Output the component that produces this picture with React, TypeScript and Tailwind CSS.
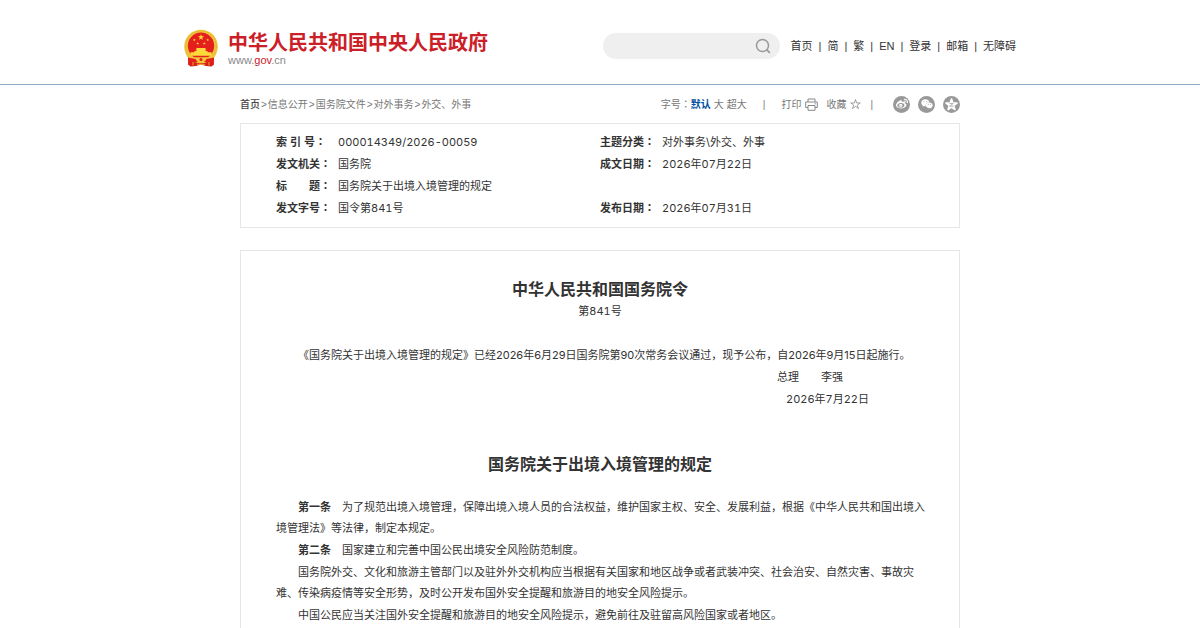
import React from "react";
import { FaWeibo, FaWeixin } from "react-icons/fa";

const navItems = ["首页", "简", "繁", "EN", "登录", "邮箱", "无障碍"];

const crumbs = ["首页", "信息公开", "国务院文件", "对外事务", "外交、外事"];

const metaRows = [
  ["索 引 号", "000014349/2026-00059", "主题分类", "对外事务\\外交、外事"],
  ["发文机关", "国务院", "成文日期", "2026年07月22日"],
  ["标　　题", "国务院关于出境入境管理的规定", "", ""],
  ["发文字号", "国令第841号", "发布日期", "2026年07月31日"],
];

const articles = [
  {
    lead: "第一条",
    text: "为了规范出境入境管理，保障出境入境人员的合法权益，维护国家主权、安全、发展利益，根据《中华人民共和国出境入境管理法》等法律，制定本规定。",
  },
  { lead: "第二条", text: "国家建立和完善中国公民出境安全风险防范制度。" },
  {
    text: "国务院外交、文化和旅游主管部门以及驻外外交机构应当根据有关国家和地区战争或者武装冲突、社会治安、自然灾害、事故灾难、传染病疫情等安全形势，及时公开发布国外安全提醒和旅游目的地安全风险提示。",
  },
  { text: "中国公民应当关注国外安全提醒和旅游目的地安全风险提示，避免前往及驻留高风险国家或者地区。" },
];

const STAR = "M0 -1L.2245 -.309L.951 -.309L.363 .118L.588 .809L0 .382L-.588 .809L-.363 .118L-.951 -.309L-.2245 -.309Z";

function Emblem() {
  return (
    <svg viewBox="0 0 34 38" className="h-[38px] w-[34px] shrink-0" aria-hidden="true">
      <path d="M4.500 26L4 35.500L6.500 37.500L12 37L17 35.500L22 37L27.500 37.500L30 35.500L29.500 26Z" fill="#d81e1b" />
      <circle cx="17" cy="17.500" r="16.800" fill="#efc63c" />
      <circle cx="17" cy="17.500" r="15.300" fill="none" stroke="#dfa828" strokeWidth="1" strokeDasharray="1.600 1.300" />
      <circle cx="17" cy="16.800" r="13.200" fill="#e3201b" />
      <g fill="#ffd93c">
        <path d={STAR} transform="translate(17 8.300) scale(3.300)" />
        <path d={STAR} transform="translate(10.300 11) scale(1.600)" />
        <path d={STAR} transform="translate(23.700 11) scale(1.600)" />
        <path d={STAR} transform="translate(13.700 14.500) scale(1.600)" />
        <path d={STAR} transform="translate(20.300 14.500) scale(1.600)" />
        <path d="M11.500 20.500L13 19H21L22.500 20.500ZM12.500 20.500H21.500V22H12.500ZM10.500 22H23.500V23.300H10.500ZM6.500 23.300H27.500V26.800H6.500Z" />
      </g>
      <path d="M1.500 24C6 28.500 12 28.500 17 28.500S28 28.500 32.500 24L29 31H5Z" fill="#efc63c" />
      <path d="M4 28.500C9 30 12 30 17 30S25 30 30 28.500V33H4Z" fill="#e3201b" />
      <path d="M11 28.500C12 32 14 33.800 17 33.800S22 32 23 28.500Z" fill="#f3c53a" />
      <circle cx="17" cy="30.500" r="1.500" fill="#e3201b" />
      <path d="M9 33V36.500M25 33V36.500M13 35.300H21" fill="none" stroke="#f0b734" strokeWidth=".9" />
    </svg>
  );
}

function SearchIcon() {
  return (
    <svg viewBox="0 0 16 16" className="h-4 w-4" fill="none" stroke="#999" strokeWidth="1.500" aria-hidden="true">
      <circle cx="7.500" cy="7.500" r="6" />
      <path d="M11.700 11.700L14.800 14.800" strokeWidth="1.800" />
    </svg>
  );
}

function PrinterIcon() {
  return (
    <svg viewBox="0 0 13 13" className="h-[13px] w-[13px]" fill="none" stroke="#888" aria-hidden="true">
      <path d="M3 4V1H10V4M3 9.500H.700V4H12.300V9.500H10M3 7.500H10V12.300H3ZM9.500 5.800H10.800" />
    </svg>
  );
}

function StarIcon() {
  return (
    <svg viewBox="-1.100 -1.100 2.200 2.200" className="h-[11px] w-[11px]" fill="none" stroke="#888" strokeWidth=".16" aria-hidden="true">
      <path d={STAR} />
    </svg>
  );
}

function QzoneIcon() {
  return (
    <svg viewBox="-6 -6 12 12" className="h-[13px] w-[13px]" aria-hidden="true">
      <path d={STAR} transform="translate(0 .3) scale(5.300)" fill="#fff" stroke="#fff" strokeWidth=".3" strokeLinejoin="round" />
      <path d="M-2 -1H1.600L-1.600 1.500H2" fill="none" stroke="#999" strokeWidth=".7" />
    </svg>
  );
}

function ShareButton({ label, children }: { label: string; children: React.ReactNode }) {
  return (
    <button type="button" aria-label={label} className="flex h-[17px] w-[17px] items-center justify-center rounded-full bg-[#999] text-white">
      {children}
    </button>
  );
}

function Colon() {
  return (
    <span lang="ja" className="font-['Noto_Sans_CJK_JP',sans-serif] leading-none">：</span>
  );
}

export default function App() {
  return (
    <div className="min-h-screen bg-white font-[Inter,'Noto_Sans_CJK_SC',sans-serif] text-[11px] text-[#333] tabular-nums" lang="zh-CN">
      <header className="border-b border-[#8fa9c6] px-4 pt-[29px] pb-[17px]">
        <div className="mx-auto flex max-w-[832px] items-start justify-between">
          <a href="#home" className="flex gap-[10px]">
            <Emblem />
            <span className="flex flex-col">
              <span className="font-['Noto_Sans_CJK_SC',sans-serif] text-[20px] leading-[25px] font-bold text-[#cb2027]">中华人民共和国中央人民政府</span>
              <span className="font-['Liberation_Sans',sans-serif] text-[11px] leading-3 text-[#888]">
                www.<span className="text-[#cb2027]">gov</span>.cn
              </span>
            </span>
          </a>
          <div className="flex items-center gap-[11px] pt-1">
            <form role="search" className="flex h-[26px] w-[177px] items-center rounded-full bg-[#efefef] pr-[9px] pl-3" onSubmit={(e) => e.preventDefault()}>
              <input type="search" aria-label="搜索" className="min-w-0 flex-1 bg-transparent outline-none" />
              <button type="submit" aria-label="搜索">
                <SearchIcon />
              </button>
            </form>
            <nav>
              <ul className="flex items-center gap-[6px] font-['Liberation_Sans','Noto_Sans_CJK_SC',sans-serif] leading-4">
                {navItems.map((item, i) => (
                  <React.Fragment key={item}>
                    {i > 0 && <li aria-hidden="true">|</li>}
                    <li>
                      <a href="#nav">{item}</a>
                    </li>
                  </React.Fragment>
                ))}
              </ul>
            </nav>
          </div>
        </div>
      </header>

      <main className="mx-auto max-w-[720px]">
        <div className="flex h-[38px] items-center justify-between font-['Liberation_Sans','Noto_Sans_CJK_SC',sans-serif] text-[10px] text-[#777]">
          <nav className="flex gap-px">
            {crumbs.map((c, i) => (
              <React.Fragment key={c}>
                {i > 0 && <span aria-hidden="true">&gt;</span>}
                <a href="#crumb" className="first:font-medium first:text-[#444]">{c}</a>
              </React.Fragment>
            ))}
          </nav>
          <div className="flex items-center">
            <span>字号<Colon /></span>
            <div className="flex gap-[3px]">
              <button type="button" className="font-bold text-[#004d9d]">默认</button>
              <button type="button">大</button>
              <button type="button">超大</button>
            </div>
            <span className="px-4">|</span>
            <button type="button" className="flex items-center gap-1">打印<PrinterIcon /></button>
            <button type="button" className="ml-2 flex items-center gap-1">收藏<StarIcon /></button>
            <span className="pr-5 pl-[9px]">|</span>
            <div className="flex gap-2">
              <ShareButton label="微博"><FaWeibo size={12} /></ShareButton>
              <ShareButton label="微信"><FaWeixin size={12} /></ShareButton>
              <ShareButton label="QQ空间"><QzoneIcon /></ShareButton>
            </div>
          </div>
        </div>

        <section className="border border-[#e6e6e6] px-[35px] pt-[7px] pb-2">
          <table className="w-full table-fixed text-left leading-[22px]">
            <colgroup>
              <col className="w-[62px]" />
              <col />
              <col className="w-[62px]" />
              <col />
            </colgroup>
            <tbody>
              {metaRows.map((row) => (
                <tr key={row[0]}>
                  <th scope="row" className="p-0 font-bold whitespace-pre">{row[0]}<Colon /></th>
                  <td className="p-0">{row[1]}</td>
                  {row[2] ? <th scope="row" className="p-0 font-bold">{row[2]}<Colon /></th> : <td />}
                  <td className="p-0">{row[3]}</td>
                </tr>
              ))}
            </tbody>
          </table>
        </section>

        <article className="mt-[22px] border border-[#e6e6e6] px-8 pt-[26px] pb-8">
          <h1 className="text-center text-[16px] leading-6 font-bold">中华人民共和国国务院令</h1>
          <p className="text-center leading-5">第841号</p>
          <div className="mt-[23px] pl-[3px] leading-[22px]">
            <p className="indent-[2em] proportional-nums">《国务院关于出境入境管理的规定》已经2026年6月29日国务院第90次常务会议通过，现予公布，自2026年9月15日起施行。</p>
            <div className="flex flex-col items-end">
              <p className="pr-[84px]">总理　　李强</p>
              <p className="pr-[58px]">2026年7月22日</p>
            </div>
          </div>
          <h2 className="mt-[42px] text-center text-[16px] leading-6 font-bold">国务院关于出境入境管理的规定</h2>
          <div className="mt-[21px] flex flex-col gap-px pl-[3px] leading-[21px]">
            {articles.map((a) => (
              <p key={a.text} className="indent-[2em]">
                {a.lead && <strong className="mr-[1em] font-bold">{a.lead}</strong>}
                {a.text}
              </p>
            ))}
          </div>
        </article>
      </main>
    </div>
  );
}
